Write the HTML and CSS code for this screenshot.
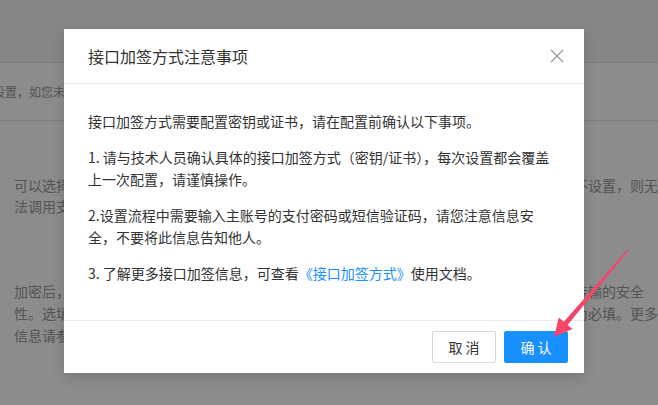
FILE: index.html
```html
<!DOCTYPE html>
<html lang="zh-CN">
<head>
    <meta charset="UTF-8">
    <title>接口加签方式</title>
    <link rel="stylesheet" href="styles.css">
</head>
<body>
    <div class="page">
        <div class="page-head"></div>
        <div class="notice">设置，如您未完成接口加签方式设置，将无法正常调用支付接口。</div>
        <p class="desc desc1">可以选择使用密钥或证书的方式对接口请求进行签名，签名方式设置完成后将立即生效，如不设置，则无<br>法调用支付相关接口。</p>
        <p class="desc desc2">加密后，平台将使用您配置的密钥对请求报文进行签名与验签，以保障交易数据在互联网络传输的安全<br>性。选填项可根据实际业务需要进行配置，页面中所有带有红色星号标记的参数配置项目均为必填。更多<br>信息请参阅接口文档说明。</p>
    </div>

    <div class="mask"></div>

    <div class="modal">
        <div class="modal-head">
            <h3>接口加签方式注意事项</h3>
            <a href="#" class="close">
                <svg width="14" height="14" viewBox="0 0 14 14"><path d="M1 1L13 13M13 1L1 13" stroke="#999" stroke-width="1.3" fill="none"/></svg>
            </a>
        </div>
        <div class="modal-body">
            <p>接口加签方式需要配置密钥或证书，请在配置前确认以下事项。</p>
            <p>1. 请与技术人员确认具体的接口加签方式（密钥/证书），每次设置都会覆盖上一次配置，请谨慎操作。</p>
            <p>2.设置流程中需要输入主账号的支付密码或短信验证码，请您注意信息安全，不要将此信息告知他人。</p>
            <p>3. 了解更多接口加签信息，可查看<a href="#" class="link">《接口加签方式》</a>使用文档。</p>
        </div>
        <div class="modal-foot">
            <button class="btn">取 消</button>
            <button class="btn btn-primary">确 认</button>
        </div>
    </div>

    <!-- 标注箭头 -->
    <svg class="arrow" width="658" height="405" viewBox="0 0 658 405">
        <polygon points="628.6,250.4 627.4,249.6 563.8,321.7 558.8,317.5 554,337 572.6,329.1 567.6,324.9" fill="#f5456b"/>
    </svg>
</body>
</html>
```

FILE: styles.css
```css
body { margin: 0; padding: 0; font-family: "Noto Sans CJK SC", "Microsoft YaHei", sans-serif; background: #fff; overflow: hidden; }
p, h3 { margin: 0; padding: 0; }
a { text-decoration: none; }

/* 底层页面 */
.page { width: 658px; height: 405px; overflow: hidden; color: #999; }
.page-head { height: 62px; background: #f5f5f5; }
.notice { height: 57px; line-height: 57px; font-size: 12px; text-indent: -7px; white-space: nowrap; border-top: 1px solid #e3e3e3; border-bottom: 1px solid #e3e3e3; }
.desc { font-size: 14px; padding-left: 14px; white-space: nowrap; }
.desc1 { line-height: 21px; margin-top: 54px; }
.desc2 { line-height: 22px; margin-top: 63px; }

.mask { position: absolute; left: 0; top: 0; width: 658px; height: 405px; background: rgba(0, 0, 0, .45); }

/* 弹窗 */
.modal { position: absolute; left: 64px; top: 29px; width: 520px; background: #fff; box-shadow: 0 4px 12px rgba(0, 0, 0, .15); color: #333; }
.modal-head { display: flex; align-items: center; justify-content: space-between; height: 54px; padding: 0 20px 0 24px; border-bottom: 1px solid #ebebeb; }
.modal-head h3 { font-size: 16px; font-weight: normal; color: #333; }
.close { display: flex; width: 14px; height: 14px; margin-right: 0; }
.modal-body { height: 174px; padding: 26px 24px 36px; font-size: 14px; line-height: 22px; }
.modal-body p { margin-bottom: 14px; }
.modal-body p:last-child { margin-bottom: 0; }
.link { color: #1890ff; }
.modal-foot { display: flex; justify-content: flex-end; gap: 8px; padding: 10px 16px 10px; border-top: 1px solid #ebebeb; }
.btn { width: 64px; height: 32px; padding: 0; font-family: inherit; font-size: 14px; color: #333; background: #fff; border: 1px solid #d9d9d9; border-radius: 2px; cursor: pointer; }
.btn-primary { color: #fff; background: #1890ff; border-color: #1890ff; }

.arrow { position: absolute; left: 0; top: 0; }
```
